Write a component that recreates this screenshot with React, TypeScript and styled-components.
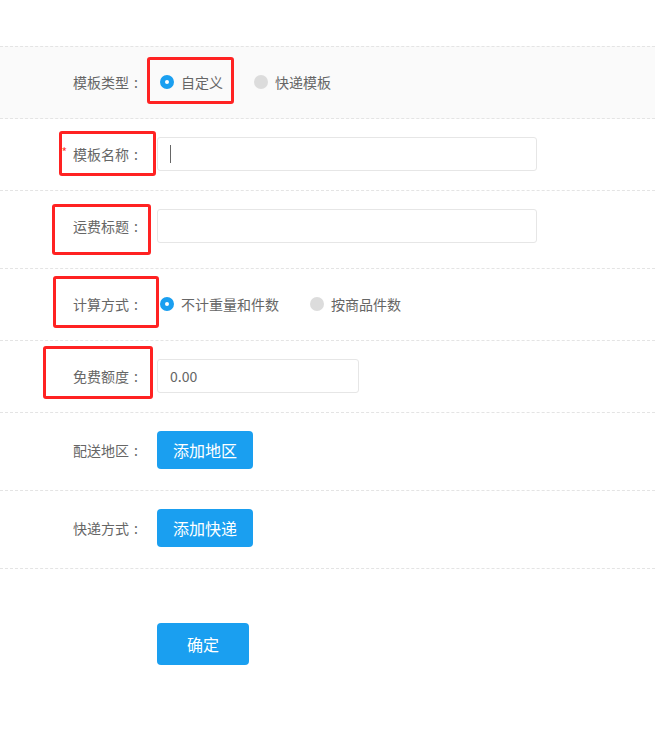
import React from 'react'
import styled, {createGlobalStyle} from 'styled-components'

const GlobalStyle = createGlobalStyle`
  html, body {
    margin: 0;
    padding: 0;
    background: #fff;
  }
  body {
    font-family: "Noto Sans CJK SC", "Liberation Sans", sans-serif;
    font-size: 14px;
    color: #666;
  }
`

const Form = styled.div`
  padding-top: 46px;
  width: 655px;
`

const Row = styled.div<{$shaded?: boolean; $first?: boolean; $pb?: number}>`
  position: relative;
  display: flex;
  align-items: center;
  padding: 18px 0 ${(p) => (p.$pb ?? 19)}px;
  border-bottom: 1px dashed #e4e4e4;
  border-top: ${(p) => (p.$first ? '1px dashed #e4e4e4' : 'none')};
  background: ${(p) => (p.$shaded ? '#fafafa' : 'transparent')};
`

const Label = styled.label`
  flex: 0 0 143px;
  text-align: right;
  line-height: 20px;
  color: #666;
  white-space: nowrap;
`

const Colon = styled.span`
  display: inline-block;
  width: 14px;
  text-align: center;
`

const Required = styled.span`
  position: relative;
  top: -3px;
  margin-right: 6px;
  color: #ff3b30;
  font-size: 12px;
`

const Control = styled.div`
  margin-left: 14px;
  display: flex;
  align-items: center;
  min-height: 34px;
`

const RadioGroup = styled.div`
  display: flex;
  align-items: center;
  margin-left: 3px;
`

const RadioItem = styled.span`
  display: inline-flex;
  align-items: center;
  margin-right: 31px;
  line-height: 20px;
  color: #666;
`

const RadioDot = styled.span<{$checked?: boolean}>`
  box-sizing: border-box;
  width: 14px;
  height: 14px;
  border-radius: 50%;
  margin-right: 7px;
  background: ${(p) => (p.$checked ? '#fff' : '#dcdcdc')};
  border: ${(p) => (p.$checked ? '5px solid #1a9ff0' : 'none')};
`

const TextBox = styled.div<{$width: number}>`
  box-sizing: border-box;
  width: ${(p) => p.$width}px;
  height: 34px;
  border: 1px solid #e6e6e6;
  border-radius: 3px;
  background: #fff;
  padding-left: 12px;
  display: flex;
  align-items: center;
  color: #666;
  font-size: 14px;
`

const Caret = styled.span`
  display: inline-block;
  width: 1px;
  height: 18px;
  background: #666;
`

const Button = styled.button<{$height?: number; $padX?: number}>`
  height: ${(p) => p.$height ?? 38}px;
  padding: 0 ${(p) => p.$padX ?? 16}px;
  border: none;
  border-radius: 4px;
  background: #1a9ff0;
  color: #fff;
  font-family: inherit;
  font-size: 16px;
  line-height: ${(p) => p.$height ?? 38}px;
  cursor: pointer;
`

const SubmitRow = styled.div`
  padding: 54px 0 0 157px;
`

const Mark = styled.span<{$l: number; $t: number; $w: number; $h: number}>`
  position: absolute;
  box-sizing: border-box;
  left: ${(p) => p.$l}px;
  top: ${(p) => p.$t}px;
  width: ${(p) => p.$w}px;
  height: ${(p) => p.$h}px;
  border: 3px solid #ff2222;
  border-radius: 3px;
  pointer-events: none;
`

export default function App() {
  return (
    <>
      <GlobalStyle />
      <Form>
        <Row $shaded $first>
          <Label>
            模板类型<Colon>:</Colon>
          </Label>
          <Control>
            <RadioGroup>
              <RadioItem>
                <RadioDot $checked />
                自定义
              </RadioItem>
              <RadioItem>
                <RadioDot />
                快递模板
              </RadioItem>
            </RadioGroup>
          </Control>
          <Mark $l={147} $t={10} $w={87} $h={47} />
        </Row>

        <Row>
          <Label>
            <Required>*</Required>模板名称<Colon>:</Colon>
          </Label>
          <Control>
            <TextBox $width={380}>
              <Caret />
            </TextBox>
          </Control>
          <Mark $l={59} $t={12} $w={97} $h={45} />
        </Row>

        <Row $pb={25}>
          <Label>
            运费标题<Colon>:</Colon>
          </Label>
          <Control>
            <TextBox $width={380} />
          </Control>
          <Mark $l={52} $t={13} $w={99} $h={51} />
        </Row>

        <Row>
          <Label>
            计算方式<Colon>:</Colon>
          </Label>
          <Control>
            <RadioGroup>
              <RadioItem>
                <RadioDot $checked />
                不计重量和件数
              </RadioItem>
              <RadioItem>
                <RadioDot />
                按商品件数
              </RadioItem>
            </RadioGroup>
          </Control>
          <Mark $l={53} $t={7} $w={106} $h={52} />
        </Row>

        <Row>
          <Label>
            免费额度<Colon>:</Colon>
          </Label>
          <Control>
            <TextBox $width={202}>0.00</TextBox>
          </Control>
          <Mark $l={43} $t={5} $w={110} $h={53} />
        </Row>

        <Row $pb={21}>
          <Label>
            配送地区<Colon>:</Colon>
          </Label>
          <Control>
            <Button>添加地区</Button>
          </Control>
        </Row>

        <Row $pb={21}>
          <Label>
            快递方式<Colon>:</Colon>
          </Label>
          <Control>
            <Button>添加快递</Button>
          </Control>
        </Row>

        <SubmitRow>
          <Button $height={42} $padX={30}>
            确定
          </Button>
        </SubmitRow>
      </Form>
    </>
  )
}
